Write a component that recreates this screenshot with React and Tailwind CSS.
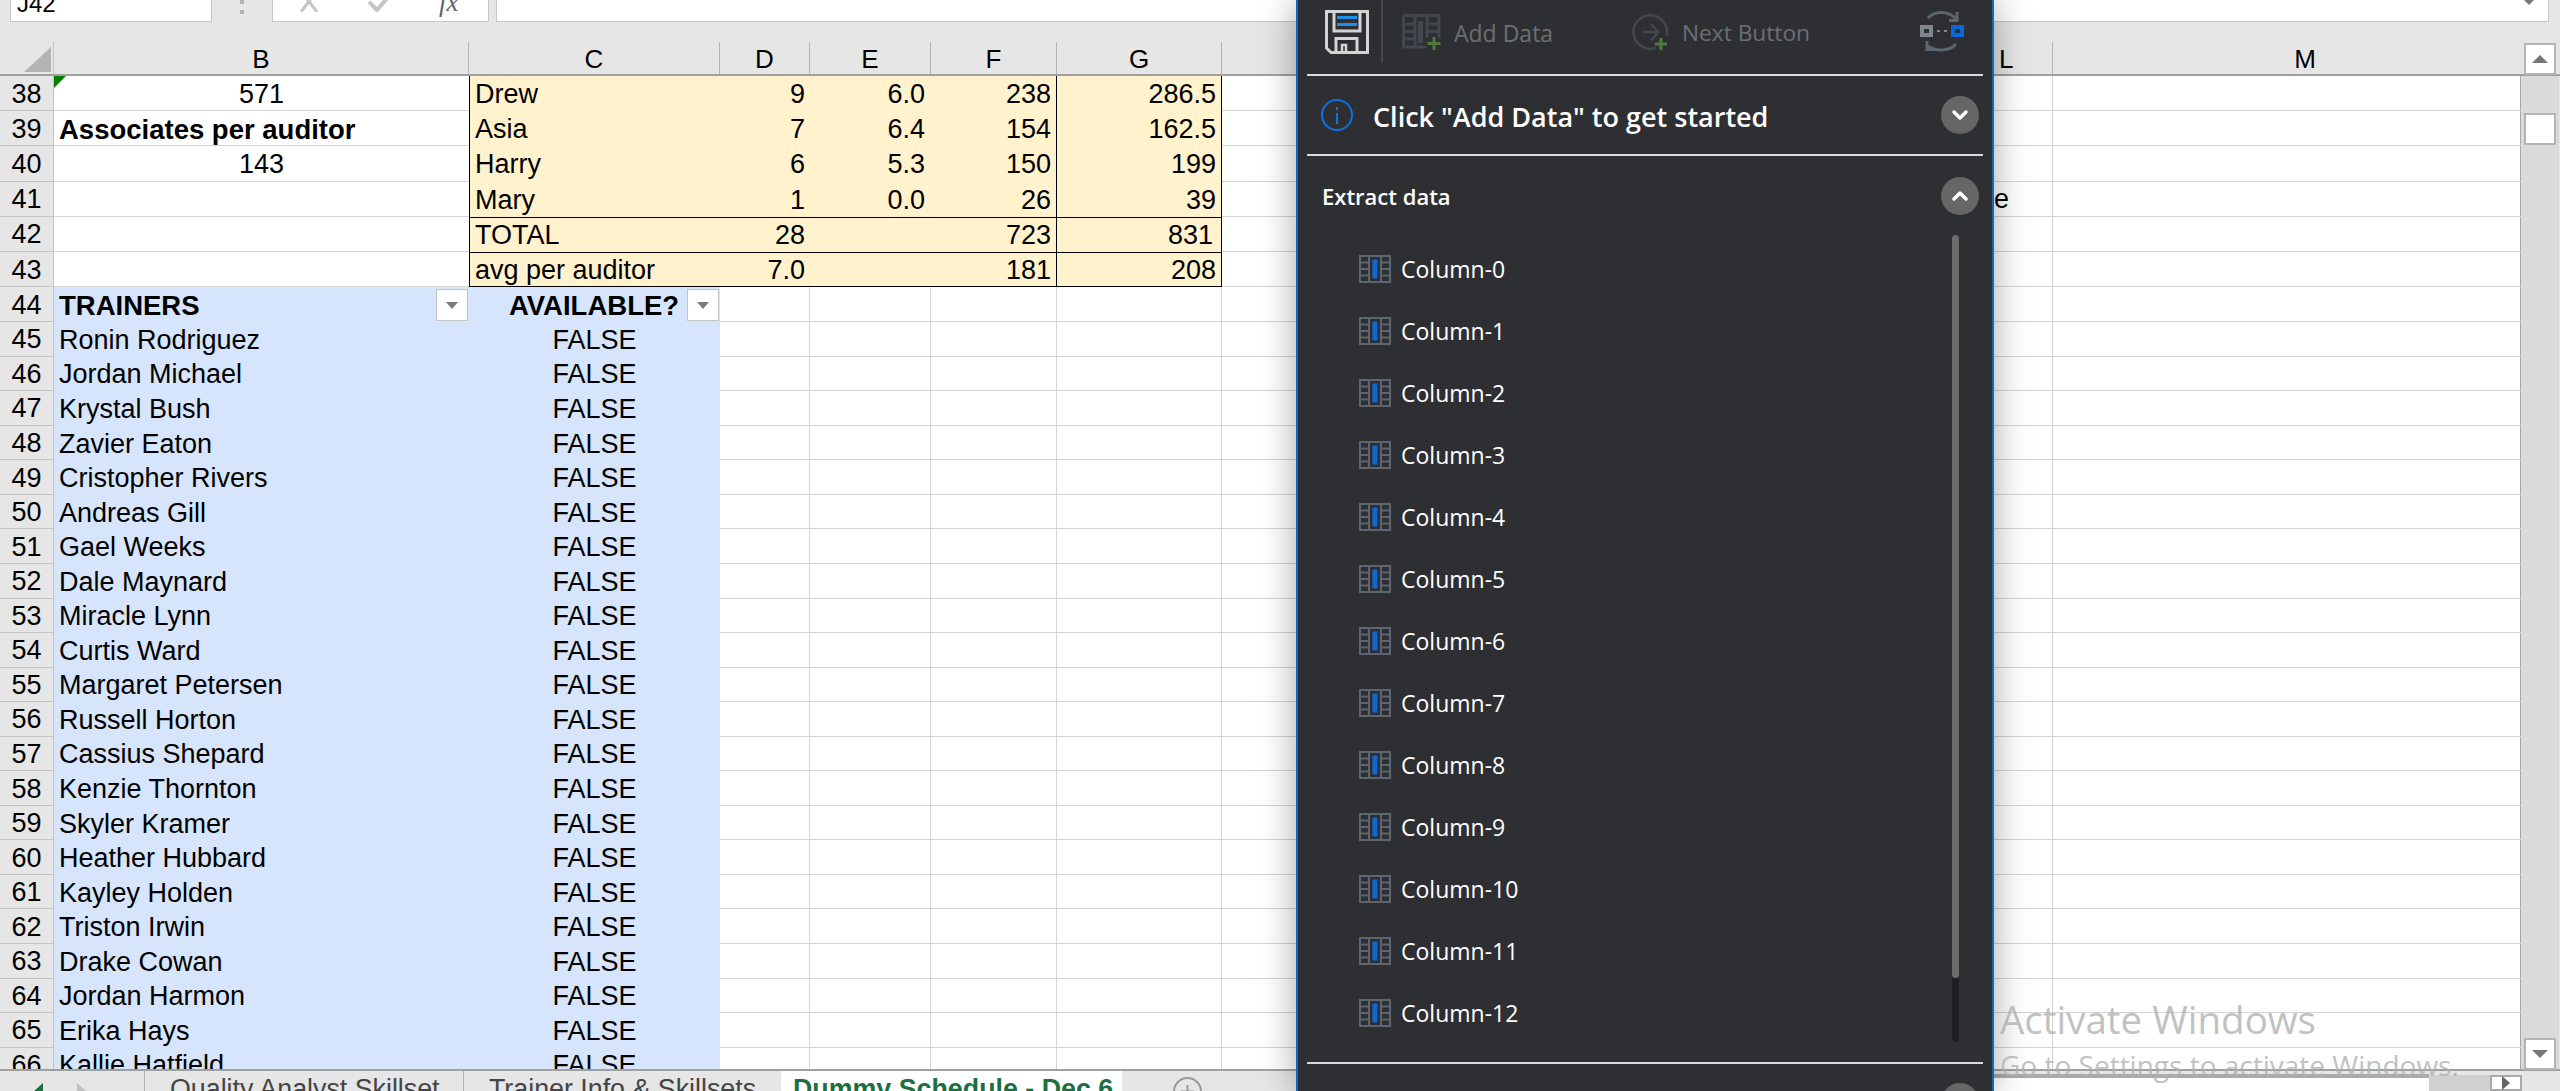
import { ChevronDown, ChevronUp } from 'lucide-react';

const topRows = [
  { n: 38, b: '571', c: 'Drew', d: '9', e: '6.0', f: '238', g: '286.5' },
  { n: 39, b: 'Associates per auditor', bold: true, c: 'Asia', d: '7', e: '6.4', f: '154', g: '162.5' },
  { n: 40, b: '143', c: 'Harry', d: '6', e: '5.3', f: '150', g: '199' },
  { n: 41, b: '', c: 'Mary', d: '1', e: '0.0', f: '26', g: '39', l: 'e' },
  { n: 42, b: '', c: 'TOTAL', d: '28', e: '', f: '723', g: '831', line: true, gTrail: true },
  { n: 43, b: '', c: 'avg per auditor', d: '7.0', e: '', f: '181', g: '208', line: true, last: true },
];

const trainers = [
  'Ronin Rodriguez', 'Jordan Michael', 'Krystal Bush', 'Zavier Eaton', 'Cristopher Rivers', 'Andreas Gill',
  'Gael Weeks', 'Dale Maynard', 'Miracle Lynn', 'Curtis Ward', 'Margaret Petersen', 'Russell Horton',
  'Cassius Shepard', 'Kenzie Thornton', 'Skyler Kramer', 'Heather Hubbard', 'Kayley Holden', 'Triston Irwin',
  'Drake Cowan', 'Jordan Harmon', 'Erika Hays', 'Kallie Hatfield',
];

const columns = Array.from({ length: 13 }, (_, i) => `Column-${i}`);

const RowHead = ({ n }) => (
  <div className="w-[54px] shrink-0 h-full bg-[#e6e6e6] border-b border-r border-[#c4c4c4] flex items-center justify-center pt-[2px]">{n}</div>
);

const Cell = ({ className = '', children }) => (
  <div className={`h-full shrink-0 flex items-center pl-[5px] pr-[5px] pt-[2px] whitespace-nowrap ${className}`}>{children}</div>
);

const FilterBtn = () => (
  <span className="absolute right-[1px] top-[2px] w-[32px] h-[32px] bg-white border border-[#c4c4c4] flex items-center justify-center">
    <span className="w-0 h-0 border-l-[6px] border-r-[6px] border-t-[7px] border-l-transparent border-r-transparent border-t-[#7a7a7a]" />
  </span>
);

const Tail = ({ label }) => (
  <>
    <div className="w-[731px] h-full shrink-0 border-b border-[#d4d4d4]" />
    <div className="w-[100px] h-full shrink-0 border-b border-r border-[#d4d4d4] flex items-center pl-[41px] pt-[2px]">{label}</div>
    <div className="w-[468px] h-full shrink-0 border-b border-[#d4d4d4]" />
  </>
);

const EmptyCols = () => (
  <>
    <div className="w-[90px] h-full shrink-0 border-r border-b border-[#d4d4d4]" />
    <div className="w-[121px] h-full shrink-0 border-r border-b border-[#d4d4d4]" />
    <div className="w-[126px] h-full shrink-0 border-r border-b border-[#d4d4d4]" />
    <div className="w-[165px] h-full shrink-0 border-r border-b border-[#d4d4d4]" />
    <Tail />
  </>
);

const FloppyIcon = () => (
  <svg width="44" height="44" viewBox="0 0 44 44" fill="none" stroke="#d4d4d4" strokeWidth="3">
    <path d="M1.5 1.5H42.5V42.5H6L1.5 38Z" />
    <path d="M9 1.5V21H35V1.5" />
    <path d="M11 42.5V28.5H32V42.5" />
    <path d="M17 42.5V35H21V42.5" strokeWidth="2.5" />
    <path d="M12 7.5H32M12 14.5H32" stroke="#1f8fe8" strokeWidth="3" />
  </svg>
);

const AddDataIcon = () => (
  <svg width="40" height="37" viewBox="0 0 40 37" fill="none">
    <g stroke="#42474d" strokeWidth="3">
      <path d="M1.5 1.5H37V24M1.5 1.5V33H24" />
      <path d="M13 1.5V33M25 1.5V24M1.5 10H13M1.5 17.5H13M1.5 25H13M25 10H37M25 17.5H37" />
    </g>
    <rect x="16" y="7" width="5" height="22" fill="#42474d" />
    <path d="M32 23V36M25.5 29.5H38.5" stroke="#4e7a3a" strokeWidth="3" />
  </svg>
);

const NextIcon = () => (
  <svg width="38" height="37" viewBox="0 0 38 37" fill="none">
    <path d="M24 33.8A16.8 16.8 0 1 1 34.6 22" stroke="#43484e" strokeWidth="2.5" />
    <path d="M11 18H26M19 10L26.5 18L19 26.5" stroke="#43484e" strokeWidth="2.5" />
    <path d="M29 24V36M23 30H35" stroke="#4e7a3a" strokeWidth="3" />
  </svg>
);

const SwapIcon = () => (
  <svg width="44" height="42" viewBox="0 0 44 42" fill="none">
    <path d="M8 7C14 0 28 -1 36 8" stroke="#5c6670" strokeWidth="3" />
    <path d="M37 1V9.5H29" stroke="#5c6670" strokeWidth="3" />
    <path d="M36 33C30 40 16 41 8 35" stroke="#5c6670" strokeWidth="3" />
    <path d="M7 30V38.5H15" stroke="#5c6670" strokeWidth="3" />
    <rect x="2" y="16" width="9" height="8" stroke="#7d8790" strokeWidth="4" />
    <rect x="33" y="16" width="9" height="8" stroke="#0a68d8" strokeWidth="4" />
    <path d="M17 20H20M24 20H27" stroke="#7d8790" strokeWidth="2" />
  </svg>
);

const ColumnIcon = () => (
  <svg width="32" height="28" viewBox="0 0 32 28" fill="none" className="shrink-0">
    <g stroke="#5d6670" strokeWidth="2">
      <rect x="1" y="1" width="30" height="26" />
      <path d="M10 1V27M22 1V27M1 7.5H10M1 14H10M1 20.5H10M22 7.5H31M22 14H31M22 20.5H31" />
    </g>
    <rect x="13.5" y="4.5" width="5" height="19" fill="#0a68d8" />
  </svg>
);

const RoundBtn = ({ up }) => (
  <span className="w-[38px] h-[38px] rounded-full bg-[#666666] flex items-center justify-center">
    {up ? <ChevronUp size={24} color="#fff" strokeWidth={3.5} /> : <ChevronDown size={24} color="#fff" strokeWidth={3.5} />}
  </span>
);

const Panel = () => (
  <div className="absolute left-[1296px] top-0 bottom-0 w-[698px] bg-[#2e2f33] border-x-2 border-[#1565c0] shadow-[0_0_34px_rgba(0,0,0,0.35)] overflow-hidden font-['Open_Sans',sans-serif] text-white px-[9px]">
    <div className="h-[76px] flex items-start border-b-2 border-[#d9d9d9]">
      <div className="pl-[18px] pt-[10px] w-[76px] h-[63px] border-r-2 border-[#44474b]">
        <FloppyIcon />
      </div>
      <div className="pl-[19px] pt-[14px] flex items-start gap-[12px] w-[249px] text-[23px] leading-[38px] text-[#6c6f72]">
        <AddDataIcon />
        <span>Add Data</span>
      </div>
      <div className="pt-[14px] flex items-start gap-[12px] text-[22.7px] leading-[38px] text-[#6c6f72]">
        <NextIcon />
        <span>Next Button</span>
      </div>
      <div className="ml-auto mr-[19px] pt-[11px]">
        <SwapIcon />
      </div>
    </div>
    <div className="h-[80px] flex items-center border-b-2 border-[#d9d9d9] pl-[14px] pr-[4px]">
      <svg width="32" height="32" viewBox="0 0 32 32" fill="none" stroke="#0a73e8" strokeWidth="2">
        <circle cx="16" cy="16" r="15" />
        <path d="M16 14V25M16 8V11" />
      </svg>
      <span className="ml-[20px] mt-[2px] text-[27px] font-semibold">Click "Add Data" to get started</span>
      <span className="ml-auto"><RoundBtn /></span>
    </div>
    <div className="h-[79px] flex items-center pl-[15px] pr-[4px]">
      <span className="text-[22px] font-semibold">Extract data</span>
      <span className="ml-auto"><RoundBtn up /></span>
    </div>
    <div className="relative h-[829px] pl-[52px]">
      {columns.map((c) => (
        <div key={c} className="h-[62px] flex items-center gap-[10px] text-[23px] pt-[5px]">
          <ColumnIcon />
          <span className="mt-[2px]">{c}</span>
        </div>
      ))}
      <div className="absolute right-[24px] top-0 w-[7px] h-[807px] bg-[#1f2023] rounded-full">
        <div className="w-full h-[743px] bg-[#6c6c6c] rounded-full" />
      </div>
      <div className="absolute left-0 right-0 top-[827px] h-[2px] bg-[#d9d9d9]" />
      <div className="absolute right-[4px] top-[848px]"><RoundBtn /></div>
    </div>
  </div>
);

export default function App() {
  return (
    <div className="relative w-full h-[1091px] overflow-hidden bg-[#e6e6e6] font-['Liberation_Sans',Arial,sans-serif] text-black text-[27px] leading-none">
      {/* formula bar, cut off at the top of the shot */}
      <div className="h-[42px] overflow-hidden">
        <div className="h-[22px] flex items-end">
          <div className="ml-[10px] w-[202px] h-[40px] shrink-0 bg-white border border-[#c6c6c6] flex items-center justify-between pl-[6px] pr-[14px] pt-[3px] text-[24px]">
            <span>J42</span>
            <span className="w-0 h-0 border-l-[4px] border-r-[4px] border-t-[5px] border-l-transparent border-r-transparent border-t-[#666] -translate-y-[17px]" />
          </div>
          <div className="w-[60px] shrink-0 flex justify-center pb-[8px]">
            <span className="w-[4px] h-[14px] border-y-4 border-[#b3b3b3]" />
          </div>
          <div className="w-[217px] h-[40px] shrink-0 bg-white border border-[#c6c6c6] flex items-end relative">
            <svg className="absolute left-[25px] bottom-[9px]" width="22" height="14" viewBox="0 0 22 14" fill="none" stroke="#c4c4c4" strokeWidth="3"><path d="M4 -6L19 14M18 -6L3 14" /></svg>
            <svg className="absolute left-[95px] bottom-[9px]" width="22" height="14" viewBox="0 0 22 14" fill="none" stroke="#c4c4c4" strokeWidth="4"><path d="M1 4L9 12L21 -2" /></svg>
            <span className="absolute left-[166px] bottom-[5px] italic font-['Liberation_Serif',serif] text-[27px] text-[#666]">fx</span>
          </div>
          <div className="ml-[7px] w-[2053px] h-[40px] shrink-0 bg-white border border-[#c6c6c6] relative">
            <span className="absolute right-[14px] top-[17px] w-0 h-0 border-l-[5px] border-r-[5px] border-t-[5px] border-l-transparent border-r-transparent border-t-[#777]" />
          </div>
        </div>
      </div>

      {/* column headers */}
      <div className="h-[34px] flex border-b-2 border-[#a0a0a0] text-[26px]">
        <div className="w-[54px] shrink-0 relative border-r border-[#c4c4c4]">
          <span className="absolute left-[24px] top-[5px] w-0 h-0 border-b-[25px] border-l-[27px] border-b-[#b4b4b4] border-l-transparent" />
        </div>
        {[
          ['B', 415], ['C', 251], ['D', 90], ['E', 121], ['F', 126], ['G', 165],
        ].map(([h, w]) => (
          <div key={h} className="shrink-0 flex items-center justify-center pt-[2px] border-r border-[#b4b4b4]" style={{ width: w }}>{h}</div>
        ))}
        <div className="w-[731px] shrink-0" />
        <div className="w-[100px] shrink-0 flex items-center pl-[46px] pt-[2px] border-r border-[#b4b4b4]">L</div>
        <div className="w-[504px] shrink-0 flex items-center justify-center pt-[2px]">M</div>
      </div>

      <div className="flex h-[993px] overflow-hidden">
        <div className="w-[2521px] shrink-0 bg-white border-r border-[#a8a8a8]">
          {topRows.map((r) => (
            <div key={r.n} className="h-[35.2px] flex">
              <RowHead n={r.n} />
              <Cell className={`relative w-[415px] border-b border-[#d4d4d4] ${r.bold ? 'font-bold text-[27.5px]' : 'justify-center'}`}>
                {r.n === 38 && <span className="absolute left-0 top-0 w-0 h-0 border-t-[12px] border-r-[12px] border-t-[#008000] border-r-transparent" />}
                {r.b}
              </Cell>
              <Cell className={`w-[251px] bg-[#fff2cc] border-l border-black ${r.line ? 'border-t' : ''} ${r.last ? 'border-b' : ''}`}>{r.c}</Cell>
              <Cell className={`w-[90px] justify-end bg-[#fff2cc] border-black ${r.line ? 'border-t' : ''} ${r.last ? 'border-b' : ''}`}>{r.d}</Cell>
              <Cell className={`w-[121px] justify-end bg-[#fff2cc] border-black pr-[6px] ${r.line ? 'border-t' : ''} ${r.last ? 'border-b' : ''}`}>{r.e}</Cell>
              <Cell className={`w-[126px] justify-end bg-[#fff2cc] border-r border-black ${r.line ? 'border-t' : ''} ${r.last ? 'border-b' : ''}`}>{r.f}</Cell>
              <Cell className={`w-[165px] justify-end bg-[#fff2cc] border-r border-black ${r.gTrail ? 'pr-[8px]' : ''} ${r.line ? 'border-t' : ''} ${r.last ? 'border-b' : ''}`}>{r.g}</Cell>
              <Tail label={r.l} />
            </div>
          ))}
          <div className="h-[35px] flex">
            <RowHead n={44} />
            <Cell className="relative w-[415px] bg-[#d6e5fc] font-bold text-[27.5px]">TRAINERS<FilterBtn /></Cell>
            <Cell className="relative w-[251px] bg-[#d6e5fc] pl-[40px] font-bold text-[27.5px]">AVAILABLE?<FilterBtn /></Cell>
            <EmptyCols />
          </div>
          {trainers.map((t, i) => (
            <div key={t} className="h-[34.55px] flex">
              <RowHead n={45 + i} />
              <Cell className="w-[415px] bg-[#d6e5fc]">{t}</Cell>
              <Cell className="w-[251px] justify-center bg-[#d6e5fc]">FALSE</Cell>
              <EmptyCols />
            </div>
          ))}
        </div>
        {/* vertical scrollbar */}
        <div className="w-[38px] shrink-0 bg-[#dadada]" />
      </div>

      {/* sheet tabs */}
      <div className="h-[22px] bg-[#e6e6e6] border-t-2 border-[#a0a0a0] flex text-[26.8px] overflow-hidden">
        <div className="w-[145px] shrink-0 relative border-r border-[#b4b4b4]">
          <span className="absolute left-[33px] top-[12px] w-0 h-0 border-y-[9px] border-r-[10px] border-y-transparent border-r-[#1d6f42]" />
          <span className="absolute left-[77px] top-[12px] w-0 h-0 border-y-[9px] border-l-[10px] border-y-transparent border-l-[#c0c0c0]" />
        </div>
        <div className="w-[319px] shrink-0 pl-[25px] pt-[5px] border-r border-[#b4b4b4] text-[#444] whitespace-nowrap">Quality Analyst Skillset</div>
        <div className="w-[317px] shrink-0 pl-[25px] pt-[5px] text-[#444] whitespace-nowrap">Trainer Info &amp; Skillsets</div>
        <div className="w-[341px] shrink-0 bg-white pl-[12px] pt-[5px] font-bold text-[#1d6f42] whitespace-nowrap">Dummy Schedule - Dec 6</div>
        <svg className="ml-[51px] mt-[6px] shrink-0" width="29" height="29" viewBox="0 0 29 29" fill="none" stroke="#999" strokeWidth="2">
          <circle cx="14.5" cy="14.5" r="13.5" />
          <path d="M14.5 8V21M8 14.5H21" />
        </svg>
        <div className="ml-auto mr-[38px] flex h-full">
          <div className="w-[435px] bg-white border-t-4 border-[#aaaaaa] mt-[3px]" />
          <div className="w-[61px] bg-[#d0d0d0] mt-[4px]" />
          <div className="w-[32px] bg-white border-2 border-[#aaaaaa] mt-[4px] flex items-center justify-center">
            <span className="w-0 h-0 border-y-[7px] border-l-[8px] border-y-transparent border-l-[#666]" />
          </div>
        </div>
      </div>

      {/* vertical scrollbar buttons */}
      <div className="absolute left-[2524px] top-[43px] w-[32px] h-[32px] bg-white border-2 border-[#b4b4b4] flex items-center justify-center">
        <span className="w-0 h-0 border-x-[8px] border-b-[8px] border-x-transparent border-b-[#777]" />
      </div>
      <div className="absolute left-[2524px] top-[113px] w-[32px] h-[32px] bg-white border-2 border-[#b4b4b4]" />
      <div className="absolute left-[2524px] top-[1038px] w-[32px] h-[32px] bg-white border-2 border-[#b4b4b4] flex items-center justify-center">
        <span className="w-0 h-0 border-x-[8px] border-t-[8px] border-x-transparent border-t-[#777]" />
      </div>

      <Panel />

      {/* windows watermark */}
      <div className="absolute left-[2000px] top-[995px] font-['Open_Sans',sans-serif] text-[#b0b0b0]/80 whitespace-nowrap pointer-events-none">
        <div className="text-[38.5px] leading-[48px]">Activate Windows</div>
        <div className="text-[28px] leading-[38px] mt-[3px]">Go to Settings to activate Windows.</div>
      </div>
    </div>
  );
}
